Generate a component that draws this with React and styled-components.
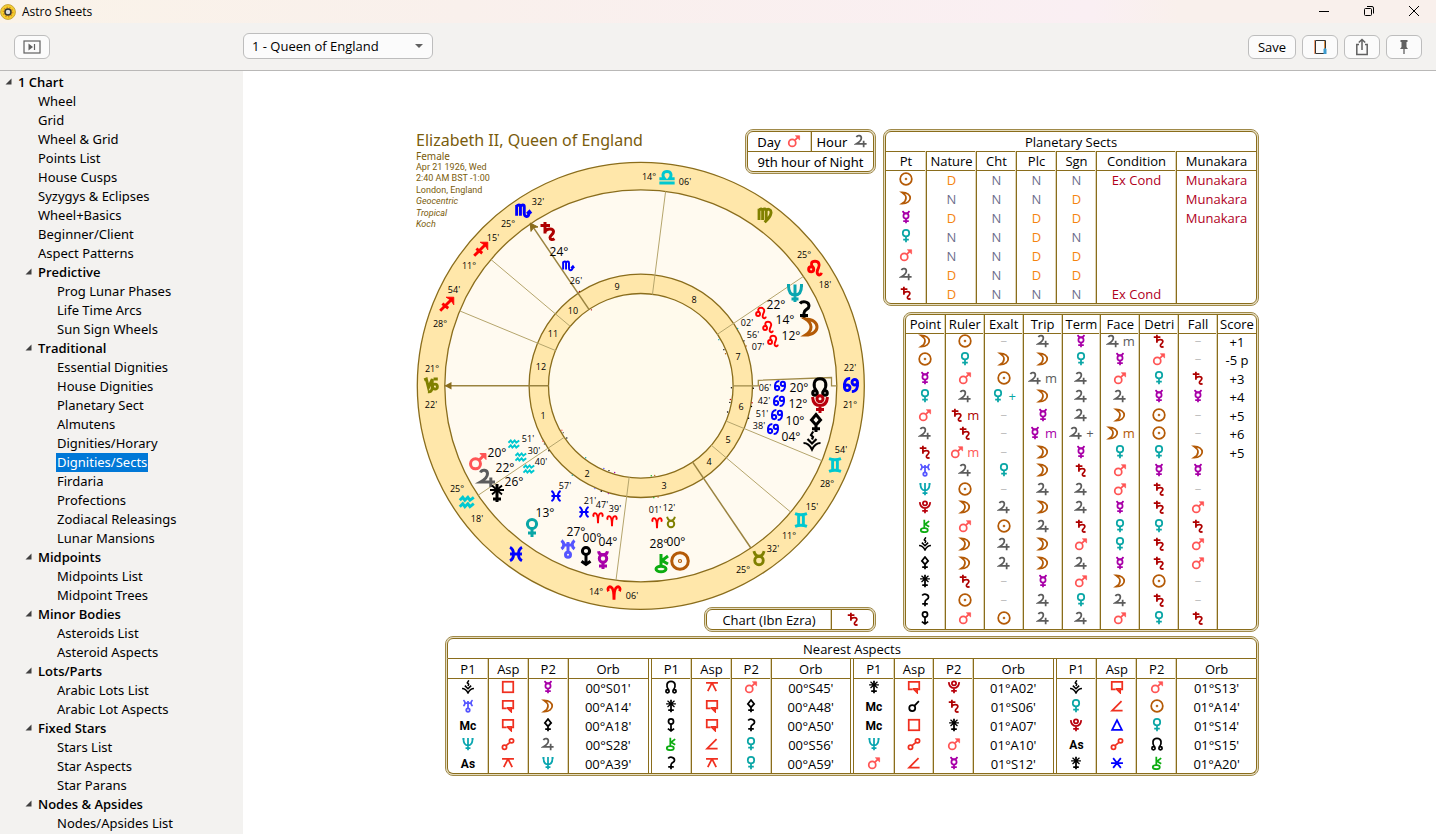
import React from "react";
import styled, { createGlobalStyle } from "styled-components";

const GOLD = "#8a6d1c";

const COLORS = {
  sun: "#b45a06",
  moon: "#b45a06",
  mercury: "#a800a8",
  venus: "#0aa6a6",
  mars: "#ff5555",
  jupiter: "#5c5c5c",
  saturn: "#ae0000",
  uranus: "#5555ff",
  neptune: "#0aa6b0",
  pluto: "#b8000c",
  chiron: "#0cac10",
  aries: "#ff0000",
  leo: "#ff0000",
  sagittarius: "#ff0000",
  taurus: "#808000",
  virgo: "#808000",
  capricorn: "#808000",
  gemini: "#00c8d0",
  libra: "#00c8d0",
  aquarius: "#00c8d0",
  cancer: "#0000ff",
  scorpio: "#0000ff",
  pisces: "#0000ff",
  square: "#f03020",
  sesqui: "#f03020",
  quincunx: "#f03020",
  opposition: "#f03020",
  semisquare: "#f03020",
  trine: "#0000ff",
  sextile: "#0000ff",
};

// all glyphs are stroked in a 20 x 20 box
const GLYPHS = {
  sun: (
    <>
      <circle cx="10" cy="10" r="8.3" />
      <circle cx="10" cy="10" r="0.6" />
    </>
  ),
  moon: <path d="M4.5 2C12 2 16 6 16 10S12 18 4.5 18C8.5 15.5 10 13 10 10S8.5 4.5 4.5 2Z" />,
  mercury: (
    <>
      <circle cx="10" cy="8.5" r="3.7" />
      <path d="M5.5 1.2C6 4 8 4.8 10 4.8S14 4 14.5 1.2M10 12.2V19M6 16H14" />
    </>
  ),
  venus: (
    <>
      <circle cx="10" cy="6" r="4.6" />
      <path d="M10 10.6V19M6 15H14" />
    </>
  ),
  mars: (
    <>
      <circle cx="7.5" cy="12.8" r="5" />
      <path d="M11.5 8.8L16 4.2" />
      <path d="M12 2.5H18V8.5Z" fill="currentColor" strokeWidth="1" />
    </>
  ),
  jupiter: <path d="M3.5 4.5C5 1 10.5 1.5 10.5 5.8C10.5 9.5 7 12 3.5 14H18M13.8 9.5V19" />,
  saturn: <path d="M7 1V12.5M2.5 4.5H12M7 10.5C9 7 15.5 7 15.5 10.8C15.5 13.5 12 14 12 16.4C12 18.8 14.5 19.2 16.5 17.8" />,
  uranus: (
    <>
      <path d="M3.5 1.5C6.5 4 6.5 7.5 3.5 10M16.5 1.5C13.5 4 13.5 7.5 16.5 10M5.8 6H14.2M10 3V13" />
      <circle cx="10" cy="15.8" r="2.5" />
    </>
  ),
  neptune: <path d="M3.5 2.5C3.5 9 6 12 10 12S16.5 9 16.5 2.5M2 2.5H5M15 2.5H18M10 1.5V19M6.5 16H13.5" />,
  pluto: (
    <>
      <circle cx="10" cy="4.8" r="3" />
      <path d="M2.5 3C3 8.5 5.5 11.5 10 11.5S17 8.5 17.5 3M10 11.5V19M6 15.5H14" />
    </>
  ),
  chiron: (
    <>
      <ellipse cx="9" cy="16" rx="5" ry="2.8" />
      <path d="M9 1V13M16 3L10 7.5L16 11" />
    </>
  ),
  node: (
    <>
      <circle cx="5" cy="16" r="2.3" />
      <circle cx="15" cy="16" r="2.3" />
      <path d="M6.5 14.2C2.5 9 3.5 1.8 10 1.8S17.5 9 13.5 14.2" />
    </>
  ),
  juno: (
    <>
      <path d="M10 1V19M6 16H14" />
      <path d="M3 7H17M5 2.5L15 11.5M15 2.5L5 11.5" strokeWidth="1.8" />
    </>
  ),
  ceres: <path d="M6 3.5C8 0.8 15 1 15 6C15 9.8 10 9 10 13V19M6 15.5H14" />,
  pallas: <path d="M10 1.5L14.5 7L10 12L5.5 7ZM10 12V19M6 15.8H14" />,
  vesta: (
    <path
      d="M11.2 0.5L9 4L11 6L10 8.5M5.5 8L10 12.5L14.5 8M1.5 12C5 12 8 14.5 10 18.5C12 14.5 15 12 18.5 12"
      strokeWidth="2.2"
    />
  ),
  apsis: (
    <>
      <circle cx="10" cy="5" r="3.6" />
      <path d="M10 8.6V18.2M5.5 15.2L10 18.4L14.5 15.2" />
    </>
  ),
  aries: <path d="M3.5 8C1.5 4.5 4 2 6.5 3C9 4 10 8 10 18C10 8 11 4 13.5 3C16 2 18.5 4.5 16.5 8" />,
  taurus: (
    <>
      <circle cx="10" cy="13" r="5" />
      <path d="M4 2C5 6 7 8 10 8S15 6 16 2" />
    </>
  ),
  gemini: <path d="M3 2.5C7 4 13 4 17 2.5M3 17.5C7 16 13 16 17 17.5M7.2 4V16M12.8 4V16" />,
  cancer: (
    <>
      <circle cx="5.6" cy="13.2" r="3.2" />
      <circle cx="14.4" cy="6.8" r="3.2" />
      <path d="M2.4 13.2C1.6 7 3.5 2.2 9 2.2M17.6 6.8C18.4 13 16.5 17.8 11 17.8" />
    </>
  ),
  leo: (
    <>
      <circle cx="5.5" cy="11.5" r="3" />
      <path d="M7.5 9.2C4.5 5.5 5.5 2 10 2S16 6 14.2 9.5S12 16 13.5 17.5S17 18 17.5 15.5" />
    </>
  ),
  virgo: <path d="M3 2.5V16M3 5C4 2 7.2 2.5 7.2 5V16M7.2 5C8.2 2 11.4 2.5 11.4 5V16M11.4 5C13 2 17.8 3 17 8S13.5 15 9.5 18.5" />,
  libra: <path d="M1 17H19M1 12H7.2C3.5 8 5.5 3.5 10 3.5S16.5 8 12.8 12H19" />,
  scorpio: <path d="M2.5 3V15.5M2.5 5C3.5 2.2 7 2.5 7 5V15.5M7 5C8 2.2 11.5 2.5 11.5 5V13C11.5 18 17 18 17.5 11M14.8 13.2L17.5 10.5L19.5 13.2" />,
  sagittarius: (
    <>
      <path d="M2 18L15 5M4.5 9.5L11.5 15" />
      <path d="M9 2H18V11L14.5 5.5Z" fill="currentColor" strokeWidth="1" />
    </>
  ),
  capricorn: (
    <>
      <path d="M2 4L4.5 3L7 13L11.5 3V13C11.5 17 9 18.5 6.5 18" />
      <path d="M11.5 12C12 8 17.5 8 17.5 12S12.5 15.5 11.5 12M13 3L18 3" />
    </>
  ),
  aquarius: <path d="M1.5 8L5 4.5L7.5 8L11 4.5L13.5 8L18 4.5M1.5 15.5L5 12L7.5 15.5L11 12L13.5 15.5L18 12" />,
  pisces: <path d="M3 2C8.5 5 8.5 15 3 18M17 2C11.5 5 11.5 15 17 18M3 10H17" />,
  square: <rect x="2.5" y="2.5" width="15" height="15" />,
  sesqui: <path d="M8 13.5H2.5V2.5H17.5V13.5H15M9.5 12.5H14.5V18L9.5 13Z" />,
  quincunx: <path d="M1.5 4H18.5M10 4L4 16M10 4L16 16" />,
  opposition: (
    <>
      <circle cx="5" cy="14.5" r="3" />
      <circle cx="15" cy="5.5" r="3" />
      <path d="M7.2 12.4L12.8 7.6" />
    </>
  ),
  semisquare: <path d="M16.5 3L3 16.5H18" />,
  conjunction: (
    <>
      <circle cx="7.5" cy="13" r="4.3" />
      <path d="M10.5 9.8L17 3" />
    </>
  ),
  trine: <path d="M10 3L17 17H3Z" />,
  sextile: <path d="M1.5 10H18.5M4.5 3L15.5 17M15.5 3L4.5 17" />,
};

const TREE = [
  { label: "1 Chart", level: 0 },
  ...["Wheel", "Grid", "Wheel & Grid", "Points List", "House Cusps", "Syzygys & Eclipses", "Wheel+Basics", "Beginner/Client", "Aspect Patterns"].map(
    (label) => ({ label, level: 1 })
  ),
  { label: "Predictive", items: ["Prog Lunar Phases", "Life Time Arcs", "Sun Sign Wheels"] },
  {
    label: "Traditional",
    items: [
      "Essential Dignities",
      "House Dignities",
      "Planetary Sect",
      "Almutens",
      "Dignities/Horary",
      "Dignities/Sects",
      "Firdaria",
      "Profections",
      "Zodiacal Releasings",
      "Lunar Mansions",
    ],
  },
  { label: "Midpoints", items: ["Midpoints List", "Midpoint Trees"] },
  { label: "Minor Bodies", items: ["Asteroids List", "Asteroid Aspects"] },
  { label: "Lots/Parts", items: ["Arabic Lots List", "Arabic Lot Aspects"] },
  { label: "Fixed Stars", items: ["Stars List", "Star Aspects", "Star Parans"] },
  { label: "Nodes & Apsides", items: ["Nodes/Apsides List"] },
];

const SECTS = [
  ["sun", "D", "N", "N", "N", "Ex Cond", "Munakara"],
  ["moon", "N", "N", "N", "D", "", "Munakara"],
  ["mercury", "D", "N", "D", "D", "", "Munakara"],
  ["venus", "N", "N", "D", "N", "", ""],
  ["mars", "N", "N", "D", "D", "", ""],
  ["jupiter", "D", "N", "D", "D", "", ""],
  ["saturn", "D", "N", "N", "N", "Ex Cond", ""],
];

const DIGNITIES = [
  ["moon", "sun", "", "jupiter", "mercury", "jupiter m", "saturn", "", "+1"],
  ["sun", "venus", "moon", "moon", "venus", "mercury", "mars", "", "-5 p"],
  ["mercury", "mars", "sun", "jupiter m", "jupiter", "mars", "venus", "saturn", "+3"],
  ["venus", "jupiter", "venus +", "moon", "jupiter", "jupiter", "mercury", "mercury", "+4"],
  ["mars", "saturn m", "", "mercury", "jupiter", "moon", "sun", "", "+5"],
  ["jupiter", "saturn", "", "mercury m", "jupiter +", "moon m", "sun", "", "+6"],
  ["saturn", "mars m", "", "moon", "mercury", "venus", "venus", "moon", "+5"],
  ["uranus", "jupiter", "venus", "moon", "saturn", "mars", "mercury", "mercury", null],
  ["neptune", "sun", "", "jupiter", "jupiter", "mars", "saturn", "", null],
  ["pluto", "moon", "jupiter", "moon", "jupiter", "mercury", "saturn", "mars", null],
  ["chiron", "mars", "sun", "jupiter", "saturn", "venus", "venus", "saturn", null],
  ["vesta", "moon", "jupiter", "moon", "mars", "venus", "saturn", "mars", null],
  ["pallas", "moon", "jupiter", "moon", "jupiter", "mercury", "saturn", "mars", null],
  ["juno", "saturn", "", "mercury", "mars", "moon", "sun", "", null],
  ["ceres", "sun", "", "jupiter", "venus", "jupiter", "saturn", "", null],
  ["apsis", "mars", "sun", "jupiter", "jupiter", "mars", "venus", "saturn", null],
];

const ASPECTS = [
  [
    ["vesta", "square", "mercury", "00°S01'"],
    ["uranus", "sesqui", "moon", "00°A14'"],
    ["Mc", "sesqui", "pallas", "00°A18'"],
    ["neptune", "opposition", "jupiter", "00°S28'"],
    ["As", "quincunx", "neptune", "00°A39'"],
  ],
  [
    ["node", "quincunx", "mars", "00°S45'"],
    ["juno", "sesqui", "pallas", "00°A48'"],
    ["apsis", "sesqui", "ceres", "00°A50'"],
    ["chiron", "semisquare", "venus", "00°S56'"],
    ["ceres", "quincunx", "venus", "00°A59'"],
  ],
  [
    ["juno", "sesqui", "pluto", "01°A02'"],
    ["Mc", "conjunction", "saturn", "01°S06'"],
    ["Mc", "square", "juno", "01°A07'"],
    ["neptune", "opposition", "mars", "01°A10'"],
    ["mars", "semisquare", "mercury", "01°S12'"],
  ],
  [
    ["vesta", "sesqui", "mars", "01°S13'"],
    ["venus", "semisquare", "sun", "01°A14'"],
    ["pluto", "trine", "venus", "01°S14'"],
    ["As", "opposition", "node", "01°S15'"],
    ["juno", "sextile", "chiron", "01°A20'"],
  ],
];

// degree, sign and minute labels of the outer ring: [text, x, y]
const RING_SIGNS = [
  ["libra", 667, 177],
  ["scorpio", 523, 211],
  ["sagittarius", 481, 249],
  ["sagittarius", 447, 304],
  ["capricorn", 431, 385],
  ["aquarius", 467, 502],
  ["pisces", 516, 554],
  ["aries", 614, 593],
  ["taurus", 759, 558],
  ["gemini", 801, 520],
  ["gemini", 835, 465],
  ["cancer", 851, 385],
  ["leo", 815, 268],
  ["virgo", 765, 215],
];

const RING_TEXT = [
  ["14°", 649, 177],
  ["06'", 685, 182],
  ["32'", 538, 202],
  ["25°", 508, 224],
  ["15'", 493, 238],
  ["11°", 469, 266],
  ["54'", 454, 290],
  ["28°", 440, 324],
  ["21°", 432, 369],
  ["22'", 431, 405],
  ["25°", 457, 489],
  ["18'", 477, 519],
  ["14°", 596, 592],
  ["06'", 632, 596],
  ["25°", 743, 570],
  ["32'", 773, 549],
  ["11°", 789, 536],
  ["15'", 812, 507],
  ["28°", 827, 484],
  ["54'", 841, 450],
  ["21°", 850, 405],
  ["22'", 850, 368],
  ["18'", 825, 285],
  ["25°", 804, 255],
];

const HOUSES = [
  [1, 543, 416],
  [2, 587, 474],
  [3, 664, 486],
  [4, 709, 462],
  [5, 728, 440],
  [6, 741, 407],
  [7, 738, 357],
  [8, 694, 300],
  [9, 617, 287],
  [10, 573, 311],
  [11, 553, 334],
  [12, 541, 367],
];

// each point: glyph, longitude, then glyph / degree / sign / minute spots
const POINTS = [
  ["saturn", 234.4, [548, 231], ["24°", 559, 252], ["scorpio", 568, 266], ["26'", 576, 281]],
  ["neptune", 142.0, [795, 293], ["22°", 776, 305], ["leo", 761, 313], ["02'", 747, 323]],
  ["ceres", 134.9, [804, 310], ["14°", 785, 320], ["leo", 768, 327], ["56'", 753, 335]],
  ["moon", 132.1, [811, 327], ["12°", 791, 336], ["leo", 773, 341], ["07'", 758, 347]],
  ["node", 110.1, [820, 387], ["20°", 799, 388], ["cancer", 780, 386], ["06'", 765, 388]],
  ["pluto", 102.7, [820, 404], ["12°", 798, 404], ["cancer", 779, 401], ["42'", 764, 401]],
  ["pallas", 100.8, [816, 423], ["10°", 795, 421], ["cancer", 777, 415], ["51'", 762, 414]],
  ["vesta", 94.6, [812, 441], ["04°", 791, 437], ["cancer", 773, 429], ["38'", 759, 426]],
  ["mars", 320.8, [478, 461], ["20°", 497, 453], ["aquarius", 514, 444], ["51'", 528, 439]],
  ["jupiter", 322.5, [487, 478], ["22°", 505, 468], ["aquarius", 521, 457], ["30'", 534, 451]],
  ["juno", 326.6, [497, 493], ["26°", 514, 482], ["aquarius", 529, 469], ["40'", 541, 462]],
  ["venus", 343.9, [532, 528], ["13°", 545, 513], ["pisces", 556, 496], ["57'", 565, 486]],
  ["uranus", 357.3, [568, 549], ["27°", 576, 532], ["pisces", 584, 512], ["21'", 590, 501]],
  ["apsis", 0.8, [586, 556], ["00°", 592, 538], ["aries", 598, 518], ["47'", 602, 505]],
  ["mercury", 4.6, [603, 560], ["04°", 608, 542], ["aries", 612, 521], ["39'", 615, 509]],
  ["chiron", 28.0, [662, 563], ["28°", 659, 544], ["aries", 657, 523], ["01'", 655, 510]],
  ["sun", 30.2, [680, 561], ["00°", 676, 542], ["taurus", 671, 522], ["12'", 669, 508]],
];

const CENTER = { x: 640.8, y: 385.8 };
const ASCENDANT = 291.37;

const polar = (lon, r) => {
  const a = ((180 + lon - ASCENDANT) * Math.PI) / 180;
  return [CENTER.x + r * Math.cos(a), CENTER.y - r * Math.sin(a)];
};

const Cusp = ({ lon, main, to = 196 }) => {
  const [x1, y1] = polar(lon, 92);
  const [x2, y2] = polar(lon, to);
  return <line x1={x1} y1={y1} x2={x2} y2={y2} stroke={main ? "#9a8340" : "#b5a56c"} strokeWidth={main ? 1.5 : 1} />;
};

const WheelGlyph = ({ name, x, y, size = 20, weight = 3 }) => (
  <g
    transform={`translate(${x - size / 2} ${y - size / 2}) scale(${size / 20})`}
    color={COLORS[name] || "#000"}
    stroke="currentColor"
    strokeWidth={weight}
    fill="none"
  >
    {GLYPHS[name]}
  </g>
);

const Wheel = () => (
  <WheelSvg viewBox="416 161 450 450" role="img" aria-label="Birth chart wheel">
    <g stroke={GOLD} strokeWidth="1.3">
      <circle cx={CENTER.x} cy={CENTER.y} r="223.5" fill="#ffe7aa" />
      <circle cx={CENTER.x} cy={CENTER.y} r="196" fill="#fffaf0" />
      <circle cx={CENTER.x} cy={CENTER.y} r="111.7" fill="#ffe7aa" />
      <circle cx={CENTER.x} cy={CENTER.y} r="92.3" fill="#fffaec" />
    </g>
    <Cusp lon={ASCENDANT} main />
    <Cusp lon={235.53} main />
    <Cusp lon={55.53} main />
    {[325.3, 14.1, 71.25, 88.9, 145.3, 194.1, 251.25, 268.9].map((lon) => (
      <Cusp key={lon} lon={lon} />
    ))}
    <path d="M733 385.8H758.3V380.3L831.5 377.5V385.8H837" fill="none" stroke="#a08a48" strokeWidth="1.3" />
    <path d="M444.5 385.8L451.5 382V389.6Z" fill={GOLD} />
    <path d="M530.2 223L538 227L533.6 227.6L531 231.4Z" fill={GOLD} stroke={GOLD} />
    {POINTS.map(([name, lon]) =>
      [90.6, 112.6].map((r) => {
        const [x, y] = polar(lon, r);
        return <circle key={name + r} cx={x} cy={y} r="0.7" fill={COLORS[name] || "#000"} />;
      })
    )}
    {RING_SIGNS.map(([name, x, y]) => (
      <WheelGlyph key={`${x}-${y}`} name={name} x={x} y={y} size={17} weight={3.4} />
    ))}
    {RING_TEXT.map(([text, x, y]) => (
      <Minute key={`${x}-${y}`} x={x} y={y + 3}>
        {text}
      </Minute>
    ))}
    {HOUSES.map(([n, x, y]) => (
      <Minute key={n} x={x} y={y + 3}>
        {n}
      </Minute>
    ))}
    {POINTS.map(([name, , at, deg, sign, min]) => (
      <g key={name}>
        <WheelGlyph name={name} x={at[0]} y={at[1]} size={20} />
        <Degree x={deg[1]} y={deg[2] + 4}>
          {deg[0]}
        </Degree>
        <WheelGlyph name={sign[0]} x={sign[1]} y={sign[2]} size={13} weight={3} />
        <Minute x={min[1]} y={min[2] + 3}>
          {min[0]}
        </Minute>
      </g>
    ))}
  </WheelSvg>
);

const Glyph = ({ name }) => {
  if (name === "Mc" || name === "As") return <Angle>{name}</Angle>;
  return (
    <GlyphSvg viewBox="0 0 20 20" color={COLORS[name] || "#000"} role="img" aria-label={name}>
      {GLYPHS[name]}
    </GlyphSvg>
  );
};

const Dignity = ({ value }) => {
  if (value === "") return <Dash>–</Dash>;
  const [name, mark] = value.split(" ");
  return (
    <Tinted $color={COLORS[name]}>
      <Glyph name={name} />
      {mark && <Mark>{mark}</Mark>}
    </Tinted>
  );
};

const Sidebar = () => (
  <Side aria-label="Sheets">
    <Tree>
      {TREE.map((node) => (
        <li key={node.label}>
          {node.level === 1 ? (
            <Leaf href="#">{node.label}</Leaf>
          ) : (
            <Branch type="button" $top={node.level === 0} aria-expanded="true">
              <svg width="7" height="7" viewBox="0 0 7 7">
                <path d="M6.5 0.5V6.5H0.5Z" fill="#404040" />
              </svg>
              {node.label}
            </Branch>
          )}
          {node.items && (
            <Tree>
              {node.items.map((item) => (
                <li key={item}>
                  <Leaf href="#" $deep $active={item === "Dignities/Sects"}>
                    <span>{item}</span>
                  </Leaf>
                </li>
              ))}
            </Tree>
          )}
        </li>
      ))}
    </Tree>
  </Side>
);

const App = () => (
  <Window>
    <GlobalStyle />
    <TitleBar>
      <AppName>
        <svg width="16" height="16" viewBox="0 0 16 16">
          <circle cx="8" cy="8" r="7.4" fill="#f3d02e" stroke="#c9a23a" />
          <circle cx="8" cy="8" r="4.6" fill="none" stroke="#e08a1c" strokeDasharray="1.4 1.4" strokeWidth="1.6" />
          <circle cx="8" cy="8" r="3" fill="#ddd" stroke="#333" strokeWidth="1.5" />
        </svg>
        Astro Sheets
      </AppName>
      <WindowButtons>
        <button type="button" aria-label="Minimize">
          <svg width="12" height="12" viewBox="0 0 12 12">
            <path d="M1 6.5H11" />
          </svg>
        </button>
        <button type="button" aria-label="Restore">
          <svg width="12" height="12" viewBox="0 0 12 12">
            <rect x="1.5" y="3.5" width="7" height="7" rx="1" />
            <path d="M4 1.5H9Q10.5 1.5 10.5 3V8.5" />
          </svg>
        </button>
        <button type="button" aria-label="Close">
          <svg width="12" height="12" viewBox="0 0 12 12">
            <path d="M1 1L11 11M11 1L1 11" />
          </svg>
        </button>
      </WindowButtons>
    </TitleBar>

    <Toolbar>
      <ToolbarSide>
        <ToolButton type="button" aria-label="Toggle list">
          <svg width="18" height="14" viewBox="0 0 18 14">
            <rect x="1" y="1" width="16" height="12" fill="none" stroke="#606060" strokeWidth="1.2" />
            <path d="M5.5 3.5V10.5L10 7Z" fill="#606060" />
            <path d="M11.5 4V10" stroke="#606060" strokeWidth="1.2" />
          </svg>
        </ToolButton>
      </ToolbarSide>
      <ChartSelect aria-label="Chart" defaultValue="queen">
        <option value="queen">1 - Queen of England</option>
      </ChartSelect>
      <ToolbarActions>
        <ToolButton type="button" $wide>
          Save
        </ToolButton>
        <ToolButton type="button" aria-label="Page">
          <svg width="14" height="16" viewBox="0 0 14 16">
            <path d="M1.5 1V15" stroke="#f5a070" />
            <path d="M2.5 1.5H12.5V14.5H2.5Z" fill="none" stroke="#333" />
            <path d="M11.5 2V10" stroke="#e09040" />
            <path d="M10.5 15V10L12 9L13.5 10V15Z" fill="#3c9cd0" />
          </svg>
        </ToolButton>
        <ToolButton type="button" aria-label="Share">
          <svg width="14" height="18" viewBox="0 0 14 18" fill="none" stroke="#606060" strokeWidth="1.5">
            <path d="M4 6.5H1.8V16.5H12.2V6.5H10M7 12V1.5M3.8 4.5L7 1.5L10.2 4.5" />
          </svg>
        </ToolButton>
        <ToolButton type="button" aria-label="Pin">
          <svg width="10" height="16" viewBox="0 0 10 16">
            <path d="M1.5 1H8.5V3H7.5V8L9 10H1L2.5 8V3H1.5Z" fill="#606060" />
            <path d="M5 10V15" stroke="#606060" strokeWidth="1.3" />
          </svg>
        </ToolButton>
      </ToolbarActions>
    </Toolbar>

    <Body>
      <Sidebar />
      <Canvas>
        <Sheet>
          <Upper>
            <WheelArea>
              <Wheel />
              <Caption>
                <h1>Elizabeth II, Queen of England</h1>
                <h2>Female</h2>
                <p>Apr 21 1926, Wed</p>
                <p>2:40 AM BST -1:00</p>
                <p>London, England</p>
                <p>
                  <em>Geocentric</em>
                </p>
                <p>
                  <em>Tropical</em>
                </p>
                <p>
                  <em>Koch</em>
                </p>
              </Caption>
              <HourFrame>
                <Grid>
                  <tbody>
                    <tr>
                      <td>
                        Day &nbsp;<Glyph name="mars" />
                      </td>
                      <td>
                        Hour &nbsp;<Glyph name="jupiter" />
                      </td>
                    </tr>
                    <RuledRow>
                      <td colSpan="2">9th hour of Night</td>
                    </RuledRow>
                  </tbody>
                </Grid>
              </HourFrame>
              <LordFrame>
                <Grid>
                  <colgroup>
                    <col />
                    <Col $w={42} />
                  </colgroup>
                  <tbody>
                    <tr>
                      <td>Chart (Ibn Ezra)</td>
                      <td>
                        <Glyph name="saturn" />
                      </td>
                    </tr>
                  </tbody>
                </Grid>
              </LordFrame>
            </WheelArea>

            <Tables>
              <Frame>
                <Grid>
                  <colgroup>
                    {[40, 50, 40, 40, 40, 80, 80].map((w, i) => (
                      <Col key={i} $w={w} />
                    ))}
                  </colgroup>
                  <thead>
                    <tr>
                      <th colSpan="7">Planetary Sects</th>
                    </tr>
                    <RuledRow>
                      {["Pt", "Nature", "Cht", "Plc", "Sgn", "Condition", "Munakara"].map((h) => (
                        <th key={h}>{h}</th>
                      ))}
                    </RuledRow>
                  </thead>
                  <tbody>
                    {SECTS.map((row, i) => (
                      <Row key={row[0]} $ruled={i === 0}>
                        {row.map((cell, j) => (
                          <td key={j}>{j === 0 ? <Glyph name={cell} /> : <Sect $kind={cell}>{cell}</Sect>}</td>
                        ))}
                      </Row>
                    ))}
                  </tbody>
                </Grid>
              </Frame>
              <DignityFrame>
                <Grid $tight>
                  <thead>
                    <tr>
                      {["Point", "Ruler", "Exalt", "Trip", "Term", "Face", "Detri", "Fall", "Score"].map((h) => (
                        <th key={h}>{h}</th>
                      ))}
                    </tr>
                  </thead>
                  <tbody>
                    {DIGNITIES.map((row, i) => (
                      <Row key={row[0]} $ruled={i === 0}>
                        {row.map((cell, j) => (
                          <td key={j}>{j === 8 ? cell : <Dignity value={cell} />}</td>
                        ))}
                      </Row>
                    ))}
                  </tbody>
                </Grid>
              </DignityFrame>
            </Tables>
          </Upper>

          <AspectFrame>
            <AspectTitle>Nearest Aspects</AspectTitle>
            <AspectGroups>
              {ASPECTS.map((group, g) => (
                <Grid key={g}>
                  <colgroup>
                    {["20%", "20%", "20%", "40%"].map((w, i) => (
                      <col key={i} width={w} />
                    ))}
                  </colgroup>
                  <thead>
                    <tr>
                      {["P1", "Asp", "P2", "Orb"].map((h) => (
                        <th key={h}>{h}</th>
                      ))}
                    </tr>
                  </thead>
                  <tbody>
                    {group.map(([p1, asp, p2, orb], i) => (
                      <Row key={orb} $ruled={i === 0}>
                        <td>
                          <Glyph name={p1} />
                        </td>
                        <td>
                          <Glyph name={asp} />
                        </td>
                        <td>
                          <Glyph name={p2} />
                        </td>
                        <td>{orb}</td>
                      </Row>
                    ))}
                  </tbody>
                </Grid>
              ))}
            </AspectGroups>
          </AspectFrame>
        </Sheet>
      </Canvas>
    </Body>
  </Window>
);
export default App;

const GlobalStyle = createGlobalStyle`
  * {
    box-sizing: border-box;
  }
  body {
    margin: 0;
    overflow: hidden;
    font-family: "Open Sans", "Noto Sans", sans-serif;
    font-size: 13px;
    color: #000;
  }
  button, select {
    font: inherit;
    color: inherit;
  }
`;

const Window = styled.div`
  display: flex;
  flex-direction: column;
  height: 100vh;
  background: #fff;
`;

const TitleBar = styled.header`
  display: flex;
  justify-content: space-between;
  flex: none;
  height: 23px;
  background: linear-gradient(to right, #faf3e9, #f9f0ec 32%, #faeff3 76%, #f9f0ec 82%);
`;

const AppName = styled.div`
  display: flex;
  align-items: center;
  gap: 6px;
  font-size: 12px;
`;

const WindowButtons = styled.div`
  display: flex;
  button {
    display: flex;
    align-items: center;
    justify-content: center;
    width: 45px;
    height: 21px;
    padding: 0;
    border: 0;
    background: none;
  }
  svg {
    fill: none;
    stroke: #000;
  }
`;

const Toolbar = styled.div`
  display: flex;
  align-items: flex-end;
  flex: none;
  height: 48px;
  padding: 0 14px 11px 0;
  background: #f3f2f0;
  border-bottom: 1px solid #b9b8b7;
`;

const ToolbarSide = styled.div`
  width: 243px;
  padding-left: 14px;
`;

const ToolbarActions = styled.div`
  display: flex;
  gap: 6px;
  margin-left: auto;
`;

const ToolButton = styled.button`
  display: flex;
  align-items: center;
  justify-content: center;
  width: ${(props) => (props.$wide ? "48px" : "36px")};
  height: 24px;
  padding: 0;
  border: 1px solid #bdbdbd;
  border-radius: 6px;
  background: #fbfbfb;
`;

const ChartSelect = styled.select`
  width: 190px;
  height: 26px;
  padding: 0 8px;
  border: 1px solid #bdbdbd;
  border-radius: 6px;
  appearance: none;
  background: #fbfbfb
    url("data:image/svg+xml,%3Csvg xmlns='http://www.w3.org/2000/svg' width='8' height='4'%3E%3Cpath d='M0 0h8L4 4z' fill='%23606060'/%3E%3C/svg%3E")
    no-repeat right 9px center;
`;

const Body = styled.div`
  display: flex;
  flex: 1;
  min-height: 0;
`;

const Side = styled.nav`
  flex: none;
  width: 243px;
  padding-top: 2px;
  overflow: hidden;
  background: #f3f2f0;
  font-family: "Noto Sans", "Open Sans", sans-serif;
`;

const Tree = styled.ul`
  margin: 0;
  padding: 0;
  list-style: none;
`;

const Branch = styled.button`
  display: flex;
  align-items: center;
  gap: 6px;
  width: 100%;
  height: 19px;
  padding: 0 0 2px ${(props) => (props.$top ? "5px" : "25px")};
  border: 0;
  background: none;
  font-family: "Open Sans", sans-serif;
  font-weight: 600;
`;

const Leaf = styled.a`
  display: block;
  height: 19px;
  line-height: 19px;
  padding-left: ${(props) => (props.$deep ? "56px" : "38px")};
  color: #000;
  text-decoration: none;
  span {
    display: inline-block;
    height: 19px;
    padding: 0 1px;
    color: ${(props) => (props.$active ? "#fff" : "inherit")};
    background: ${(props) => (props.$active ? "#0078d7" : "none")};
  }
`;

const Canvas = styled.main`
  display: flex;
  flex: 1;
  align-items: center;
  justify-content: center;
  min-width: 0;
  padding-right: 5px;
`;

const Sheet = styled.section`
  display: flex;
  flex-direction: column;
  gap: 4px;
  width: 100%;
  max-width: 844px;
`;

const Upper = styled.div`
  display: flex;
  gap: 7px;
`;

// the wheel fills the area, caption and small frames share its corners
const WheelArea = styled.div`
  display: grid;
  flex: 1;
  > * {
    grid-area: 1 / 1;
  }
`;

const WheelSvg = styled.svg`
  display: block;
  width: 100%;
  max-width: 450px;
  margin-top: 32px;
  margin-left: 1px;
`;

const Degree = styled.text`
  font-size: 12px;
  text-anchor: middle;
`;

const Minute = styled.text`
  font-size: 9px;
  text-anchor: middle;
`;

const Caption = styled.div`
  place-self: start;
  padding-left: 1px;
  color: #7a5c0c;
  font-family: "Noto Sans", "Open Sans", sans-serif;
  h1 {
    margin: 0;
    font-size: 16px;
    line-height: 22px;
    font-weight: 400;
  }
  h2 {
    margin: 0;
    font-size: 10px;
    line-height: 10px;
    font-weight: 400;
  }
  p {
    margin: 0;
    font-family: Roboto, sans-serif;
    font-size: 9px;
    line-height: 11px;
  }
  p:nth-of-type(odd) {
    line-height: 12px;
  }
`;

const Frame = styled.div`
  padding: 1px;
  border: 1px solid #a08a4a;
  border-radius: 8px;
  background: #fff;
  box-shadow: inset 0 0 0 1px #e4dcc0;
  > table {
    border: 1px solid ${GOLD};
    border-radius: 6px;
  }
`;

const HourFrame = styled(Frame)`
  place-self: start end;
  width: 131px;
  font-family: "Noto Sans", "Open Sans", sans-serif;
  tr + tr td {
    height: 20px;
  }
`;

const LordFrame = styled(Frame)`
  place-self: end end;
  width: 172px;
`;

const DignityFrame = styled(Frame)`
  width: 356px;
`;

const Tables = styled.div`
  display: flex;
  flex-direction: column;
  flex: none;
  align-items: flex-end;
  gap: 6px;
  width: 376px;
  > ${Frame}:first-child {
    width: 100%;
  }
`;

const Grid = styled.table`
  width: 100%;
  table-layout: fixed;
  border-spacing: 0;
  text-align: center;
  th,
  td {
    height: 19px;
    padding: 0;
    font-weight: 400;
    line-height: 18px;
    white-space: nowrap;
  }
  ${(props) =>
    props.$tight &&
    `
    td {
      line-height: 17px;
    }
    th,
    tr:nth-child(odd) td {
      height: 18px;
    }
  `}
  th + th,
  td + td {
    border-left: 1px solid ${GOLD};
    box-shadow: -1px 0 #ddd4b6;
  }
`;

const Col = styled.col`
  width: ${(props) => props.$w}px;
`;

const Row = styled.tr`
  td {
    border-top: ${(props) => (props.$ruled ? `1px solid ${GOLD}` : "0")};
  }
`;

const RuledRow = styled.tr`
  th,
  td {
    border-top: 1px solid ${GOLD};
  }
`;

const AspectFrame = styled(Frame)`
  align-self: flex-end;
  width: 814px;
  max-width: 100%;
`;

const AspectTitle = styled.div`
  height: 21px;
  line-height: 20px;
  border: 1px solid ${GOLD};
  border-radius: 6px 6px 0 0;
  text-align: center;
`;

const AspectGroups = styled.div`
  display: grid;
  grid-template-columns: repeat(4, 1fr);
  gap: 2px;
  border: 1px solid ${GOLD};
  border-top: 0;
  border-radius: 0 0 6px 6px;
  table:not(:first-child) {
    border-left: 1px solid ${GOLD};
  }
  table:not(:last-child) {
    border-right: 1px solid ${GOLD};
  }
`;

const Sect = styled.span`
  color: ${(props) => (props.$kind === "D" ? "#f58410" : props.$kind === "N" ? "#6e6e8c" : "#b0001c")};
`;

const Tinted = styled.span`
  color: ${(props) => props.$color || "#000"};
`;

const Mark = styled.span`
  margin-left: 3px;
  line-height: 1;
  vertical-align: 1px;
`;

const Dash = styled.span`
  color: #c0c0c0;
  line-height: 1;
  vertical-align: 2px;
`;

const GlyphSvg = styled.svg`
  width: 14px;
  height: 14px;
  fill: none;
  stroke: currentColor;
  stroke-width: 2.5px;
  vertical-align: -1px;
`;

const Angle = styled.span`
  font-family: Roboto, sans-serif;
  font-size: 12px;
  font-weight: 700;
`;
